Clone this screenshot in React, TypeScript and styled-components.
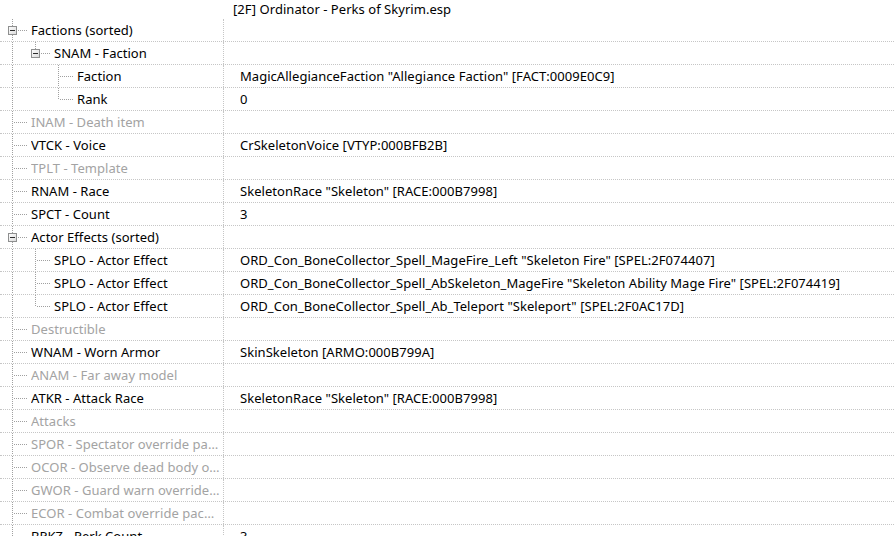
import React from 'react';
import styled, { createGlobalStyle } from 'styled-components';

const GlobalStyle = createGlobalStyle`
  html, body {
    margin: 0;
    padding: 0;
    background: #ffffff;
    overflow: hidden;
  }
  body {
    font-family: "Noto Sans", "Open Sans", sans-serif;
    font-size: 13px;
    letter-spacing: 0.04px;
    color: #000000;
  }
`;

type RecordNode = {
  name: string;
  value?: string;
  muted?: boolean;
  children?: RecordNode[];
};

type FlatRow = {
  node: RecordNode;
  level: number;
  rails: boolean[]; // whether each ancestor column keeps its vertical line
  isLast: boolean;
  isRoot: boolean;
};

const COL = 23;
const ROW_H = 22;
const MID = 11;

const records: RecordNode[] = [
  {
    name: 'Factions (sorted)',
    children: [
      {
        name: 'SNAM - Faction',
        children: [
          { name: 'Faction', value: 'MagicAllegianceFaction "Allegiance Faction" [FACT:0009E0C9]' },
          { name: 'Rank', value: '0' },
        ],
      },
    ],
  },
  { name: 'INAM - Death item', muted: true },
  { name: 'VTCK - Voice', value: 'CrSkeletonVoice [VTYP:000BFB2B]' },
  { name: 'TPLT - Template', muted: true },
  { name: 'RNAM - Race', value: 'SkeletonRace "Skeleton" [RACE:000B7998]' },
  { name: 'SPCT - Count', value: '3' },
  {
    name: 'Actor Effects (sorted)',
    children: [
      {
        name: 'SPLO - Actor Effect',
        value: 'ORD_Con_BoneCollector_Spell_MageFire_Left "Skeleton Fire" [SPEL:2F074407]',
      },
      {
        name: 'SPLO - Actor Effect',
        value: 'ORD_Con_BoneCollector_Spell_AbSkeleton_MageFire "Skeleton Ability Mage Fire" [SPEL:2F074419]',
      },
      {
        name: 'SPLO - Actor Effect',
        value: 'ORD_Con_BoneCollector_Spell_Ab_Teleport "Skeleport" [SPEL:2F0AC17D]',
      },
    ],
  },
  { name: 'Destructible', muted: true },
  { name: 'WNAM - Worn Armor', value: 'SkinSkeleton [ARMO:000B799A]' },
  { name: 'ANAM - Far away model', muted: true },
  { name: 'ATKR - Attack Race', value: 'SkeletonRace "Skeleton" [RACE:000B7998]' },
  { name: 'Attacks', muted: true },
  { name: 'SPOR - Spectator override package list', muted: true },
  { name: 'OCOR - Observe dead body override package list', muted: true },
  { name: 'GWOR - Guard warn override package list', muted: true },
  { name: 'ECOR - Combat override package list', muted: true },
  { name: 'BPKZ - Perk Count', value: '3' },
];

function flatten(nodes: RecordNode[], level: number, rails: boolean[], out: FlatRow[]) {
  nodes.forEach((node, i) => {
    const isRoot = level === 1;
    // root records keep the rail running, the list goes on below the window
    const isLast = !isRoot && i === nodes.length - 1;
    out.push({ node, level, rails, isLast, isRoot });
    if (node.children) flatten(node.children, level + 1, [...rails, !isLast], out);
  });
  return out;
}

const rows = flatten(records, 1, [], []);

const Tree = styled.div`
  width: 894px;
  display: flex;
  flex-direction: column;
`;

const HeaderRow = styled.div`
  height: 19px;
  display: flex;
  align-items: center;
  padding-left: 233px;
  padding-bottom: 1px;
  white-space: nowrap;
  margin-top: -1px;
`;

const Row = styled.div`
  display: flex;
  height: ${ROW_H}px;
  border-bottom: 1px dotted #c6c6c6;
  white-space: nowrap;
`;

const NameCell = styled.div`
  width: 223px;
  flex: none;
  display: flex;
  align-items: center;
  border-right: 1px dotted #c6c6c6;
  overflow: hidden;
`;

const Label = styled.span<{ $muted?: boolean }>`
  margin-left: 4px;
  padding-right: 2px;
  overflow: hidden;
  text-overflow: ellipsis;
  color: ${(p) => (p.$muted ? '#a3a3a3' : '#000000')};
`;

const ValueCell = styled.div`
  flex: 1;
  display: flex;
  align-items: center;
  padding-left: 16px;
  overflow: hidden;
`;

const GuideSvg = styled.svg`
  flex: none;
  display: block;
  shape-rendering: crispEdges;
`;

const lineProps = { stroke: '#a0a0a0', strokeWidth: 1, strokeDasharray: '1 1' };

function Rail({ on }: { on: boolean }) {
  return (
    <GuideSvg width={COL} height={ROW_H}>
      {on && <line x1={12.5} y1={0} x2={12.5} y2={ROW_H} {...lineProps} />}
    </GuideSvg>
  );
}

function Branch({ row }: { row: FlatRow }) {
  const hasKids = !!row.node.children;
  return (
    <GuideSvg width={27} height={ROW_H}>
      <defs>
        <linearGradient id="box-fill" x1="0" y1="0" x2="1" y2="1">
          <stop offset="0" stopColor="#ffffff" />
          <stop offset="1" stopColor="#d9d9d9" />
        </linearGradient>
      </defs>
      <line x1={12.5} y1={0} x2={12.5} y2={row.isLast ? MID : ROW_H} {...lineProps} />
      <line x1={hasKids ? 18 : 14} y1={MID + 0.5} x2={27} y2={MID + 0.5} {...lineProps} />
      {hasKids && (
        <g>
          <rect x={8.5} y={MID - 3.5} width={8} height={8} fill="url(#box-fill)" stroke="#8e8f8f" />
          <line x1={10} y1={MID + 0.5} x2={15} y2={MID + 0.5} stroke="#2c2c2c" />
        </g>
      )}
    </GuideSvg>
  );
}

export default function App() {
  return (
    <>
      <GlobalStyle />
      <Tree>
        <HeaderRow>[2F] Ordinator - Perks of Skyrim.esp</HeaderRow>
        {rows.map((row, i) => (
          <Row key={i}>
            <NameCell>
              {row.rails.map((on, j) => (
                <Rail key={j} on={on} />
              ))}
              <Branch row={row} />
              <Label $muted={row.node.muted}>{row.node.name}</Label>
            </NameCell>
            <ValueCell>{row.node.value}</ValueCell>
          </Row>
        ))}
      </Tree>
    </>
  );
}
